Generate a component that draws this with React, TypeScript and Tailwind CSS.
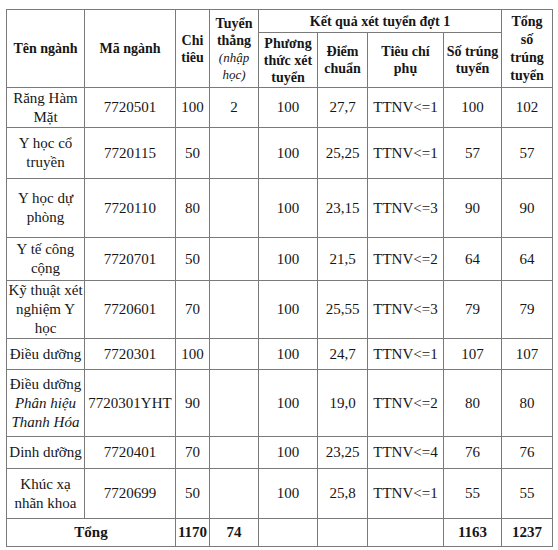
const rows: {
  name: React.ReactNode;
  code: string;
  quota: string;
  direct: string;
  method: string;
  score: string;
  crit: string;
  passed: string;
  total: string;
  h: string;
}[] = [
  { name: <>Răng Hàm<br />Mặt</>, code: '7720501', quota: '100', direct: '2', method: '100', score: '27,7', crit: 'TTNV<=1', passed: '100', total: '102', h: 'h-[40px]' },
  { name: <>Y học cổ<br />truyền</>, code: '7720115', quota: '50', direct: '', method: '100', score: '25,25', crit: 'TTNV<=1', passed: '57', total: '57', h: 'h-[51px]' },
  { name: <>Y học dự<br />phòng</>, code: '7720110', quota: '80', direct: '', method: '100', score: '23,15', crit: 'TTNV<=3', passed: '90', total: '90', h: 'h-[59px]' },
  { name: <>Y tế công<br />cộng</>, code: '7720701', quota: '50', direct: '', method: '100', score: '21,5', crit: 'TTNV<=2', passed: '64', total: '64', h: 'h-[43px]' },
  { name: <>Kỹ thuật xét<br />nghiệm Y<br />học</>, code: '7720601', quota: '70', direct: '', method: '100', score: '25,55', crit: 'TTNV<=3', passed: '79', total: '79', h: 'h-[55px]' },
  { name: <>Điều dưỡng</>, code: '7720301', quota: '100', direct: '', method: '100', score: '24,7', crit: 'TTNV<=1', passed: '107', total: '107', h: 'h-[31px]' },
  { name: <>Điều dưỡng<br /><i>Phân hiệu</i><br /><i>Thanh Hóa</i></>, code: '7720301YHT', quota: '90', direct: '', method: '100', score: '19,0', crit: 'TTNV<=2', passed: '80', total: '80', h: 'h-[67px]' },
  { name: <>Dinh dưỡng</>, code: '7720401', quota: '70', direct: '', method: '100', score: '23,25', crit: 'TTNV<=4', passed: '76', total: '76', h: 'h-[32px]' },
  { name: <>Khúc xạ<br />nhãn khoa</>, code: '7720699', quota: '50', direct: '', method: '100', score: '25,8', crit: 'TTNV<=1', passed: '55', total: '55', h: 'h-[50px]' },
];

const cell = "border border-[#7a7a7a] text-center align-middle p-0 font-['Liberation_Serif',serif]";

function App() {
  return (
    <div className="w-[558px] h-[550px] bg-white pt-[9px] pl-[6px] font-['Liberation_Serif',serif] text-[#161616]">
      <table className="table-fixed border-collapse w-[546px] text-[15px] leading-[19px]">
        <colgroup>
          <col className="w-[78px]" />
          <col className="w-[91px]" />
          <col className="w-[34px]" />
          <col className="w-[49px]" />
          <col className="w-[59px]" />
          <col className="w-[50px]" />
          <col className="w-[76px]" />
          <col className="w-[58px]" />
          <col className="w-[51px]" />
        </colgroup>
        <thead className="font-bold text-[14px] leading-[17px]">
          <tr className="h-[23px]">
            <th rowSpan={2} className={cell}>Tên ngành</th>
            <th rowSpan={2} className={cell}>Mã ngành</th>
            <th rowSpan={2} className={cell}>Chi<br />tiêu</th>
            <th rowSpan={2} className={cell}>
              Tuyển<br />thẳng<br />
              <span className="font-normal italic text-[13px]">(nhập<br />học)</span>
            </th>
            <th colSpan={4} className={cell}>Kết quả xét tuyển đợt 1</th>
            <th rowSpan={2} className={`${cell} leading-[18px]`}>Tổng<br />số<br />trúng<br />tuyển</th>
          </tr>
          <tr className="h-[55px]">
            <th className={cell}>Phương<br />thức xét<br />tuyển</th>
            <th className={cell}>Điểm<br />chuẩn</th>
            <th className={cell}>Tiêu chí<br />phụ</th>
            <th className={cell}>Số trúng<br />tuyển</th>
          </tr>
        </thead>
        <tbody>
          {rows.map((r) => (
            <tr key={r.code} className={r.h}>
              <td className={cell}>{r.name}</td>
              <td className={cell}>{r.code}</td>
              <td className={cell}>{r.quota}</td>
              <td className={cell}>{r.direct}</td>
              <td className={cell}>{r.method}</td>
              <td className={cell}>{r.score}</td>
              <td className={cell}>{r.crit}</td>
              <td className={cell}>{r.passed}</td>
              <td className={cell}>{r.total}</td>
            </tr>
          ))}
          <tr className="h-[28px] font-bold">
            <td colSpan={2} className={cell}>Tổng</td>
            <td className={cell}>1170</td>
            <td className={cell}>74</td>
            <td className={cell}></td>
            <td className={cell}></td>
            <td className={cell}></td>
            <td className={cell}>1163</td>
            <td className={cell}>1237</td>
          </tr>
        </tbody>
      </table>
    </div>
  );
}

export default App;
